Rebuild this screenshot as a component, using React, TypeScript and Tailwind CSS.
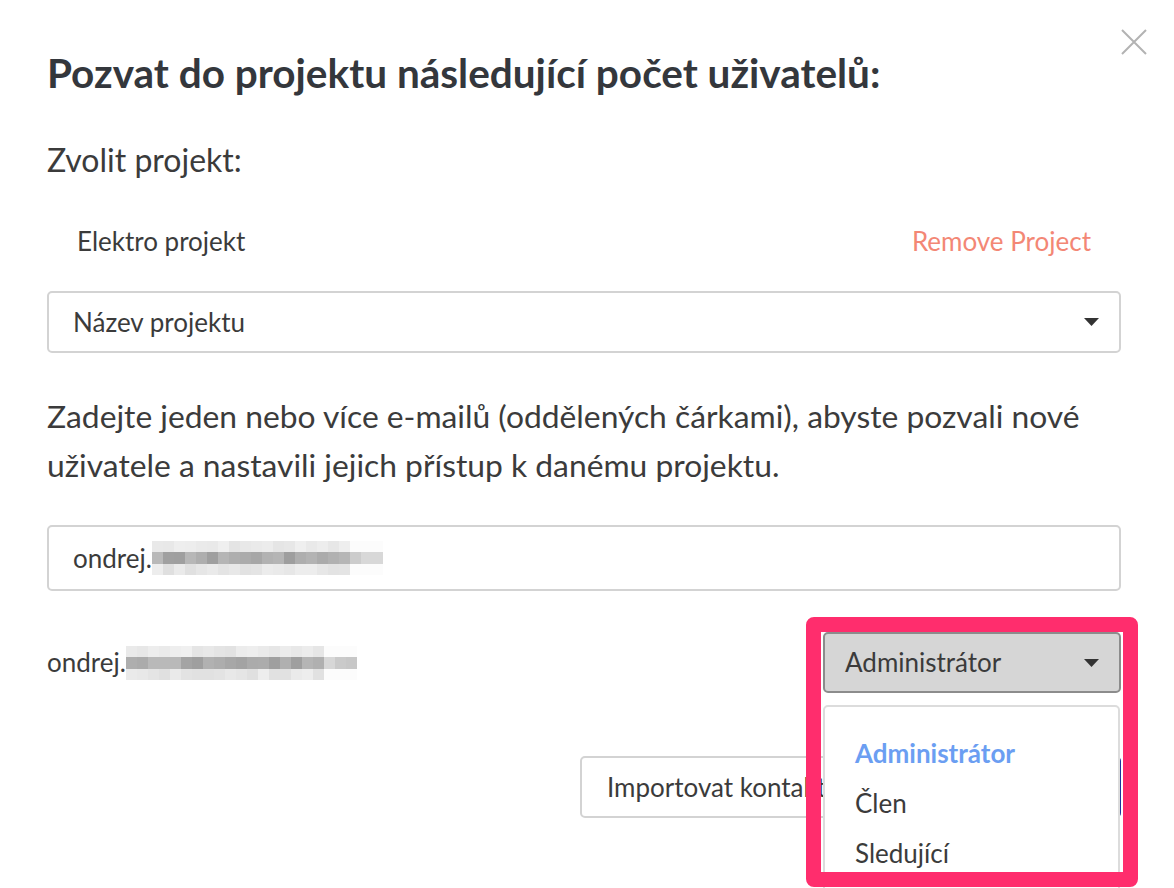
import React from 'react';

const FONT = { fontFamily: 'Lato, "Noto Sans", sans-serif' };

// pixelated blur that hides the rest of the e-mail address
function Mosaic({ cols, seed }: { cols: number; seed: number }) {
  let s = seed;
  const rnd = () => {
    s = (s * 9301 + 49297) % 233280;
    return s / 233280;
  };
  const rows = [
    { base: 240, spread: 14, h: 'h-[11px]' },
    { base: 186, spread: 28, h: 'h-[12px]' },
    { base: 238, spread: 16, h: 'h-[11px]' },
  ];
  return (
    <div className="flex flex-col">
      {rows.map((r, ri) => (
        <div key={ri} className="flex">
          {Array.from({ length: cols }).map((_, ci) => {
            const fade = ci > cols - 4 ? 40 : 0;
            const v = Math.min(252, Math.round(r.base - rnd() * r.spread + fade));
            return <div key={ci} className={`w-[11px] ${r.h}`} style={{ backgroundColor: `rgb(${v},${v},${v})` }} />;
          })}
        </div>
      ))}
    </div>
  );
}

function Caret() {
  return (
    <svg width="15" height="8" viewBox="0 0 15 8" className="shrink-0">
      <path d="M0 0 L15 0 L7.5 8 Z" fill="#333333" />
    </svg>
  );
}

export default function App() {
  return (
    <div className="relative w-full h-[888px] overflow-hidden bg-white text-[#3b3b3b]" style={FONT}>
      {/* close */}
      <svg className="absolute left-[1121px] top-[29px]" width="26" height="26" viewBox="0 0 26 26">
        <path d="M1 1 L25 25 M25 1 L1 25" stroke="#b3b3b3" strokeWidth="2" />
      </svg>

      <div className="flex flex-col pl-[47px] pr-[53px] pt-[49px]">
        <h1 className="text-[40.5px] leading-[1.2] font-bold text-[#34373c]">Pozvat do projektu následující počet uživatelů:</h1>

        <p className="mt-[43px] text-[32px] leading-[1.2]">Zvolit projekt:</p>

        <div className="mt-[47px] flex items-center justify-between pl-[30px] pr-[30px] text-[26px] leading-[1.2]">
          <span>Elektro projekt</span>
          <span className="text-[#f38775]">Remove Project</span>
        </div>

        <div className="mt-[34px] h-[62px] flex items-center justify-between rounded-[5px] border-2 border-[#d3d3d3] pl-[24px] pr-[20px] text-[26px]">
          <span>Název projektu</span>
          <Caret />
        </div>

        <p className="mt-[39px] text-[31.8px] leading-[49px]">
          Zadejte jeden nebo více e-mailů (oddělených čárkami), abyste pozvali nové uživatele a nastavili jejich přístup k danému projektu.
        </p>

        <div className="mt-[35px] h-[66px] flex items-center rounded-[5px] border-2 border-[#d3d3d3] pl-[24px] text-[26px]">
          <span>ondrej.</span>
          <Mosaic cols={21} seed={7} />
        </div>

        <div className="mt-[41px] flex items-center justify-between">
          <div className="flex items-center text-[26px]">
            <span>ondrej.</span>
            <Mosaic cols={21} seed={31} />
          </div>
          <div className="relative">
            <div className="w-[298px] h-[61px] flex items-center justify-between rounded-[5px] border-2 border-[#8c8c8c] bg-[#d6d6d6] pl-[20px] pr-[20px] text-[26px]">
              <span>Administrátor</span>
              <Caret />
            </div>
            {/* open menu */}
            <div className="absolute left-0 top-[73px] z-20 w-[297px] h-[200px] rounded-[5px] border-2 border-[#dcdcdc] bg-white pl-[30px] pt-[21px] text-[26px]">
              <div className="h-[50px] flex items-center font-bold text-[#6b9ef2]">Administrátor</div>
              <div className="h-[50px] flex items-center">Člen</div>
              <div className="h-[50px] flex items-center">Sledující</div>
            </div>
          </div>
        </div>

        <div className="mt-[63px] flex justify-end gap-[14px]">
          <div className="w-[293px] h-[62px] flex items-center rounded-[5px] border-2 border-[#d3d3d3] px-[25px] text-[26px] whitespace-nowrap">
            Importovat kontakty
          </div>
          <div className="w-[234px] h-[62px] flex items-center justify-center rounded-[5px] bg-[#1f2f9c] text-white text-[26px]">
            Pozvat
          </div>
        </div>
      </div>

      {/* highlight frame */}
      <div className="absolute left-[806px] top-[617px] z-30 w-[332px] h-[270px] rounded-[8px] border-[15px] border-[#ff2d6d]" />
    </div>
  );
}
